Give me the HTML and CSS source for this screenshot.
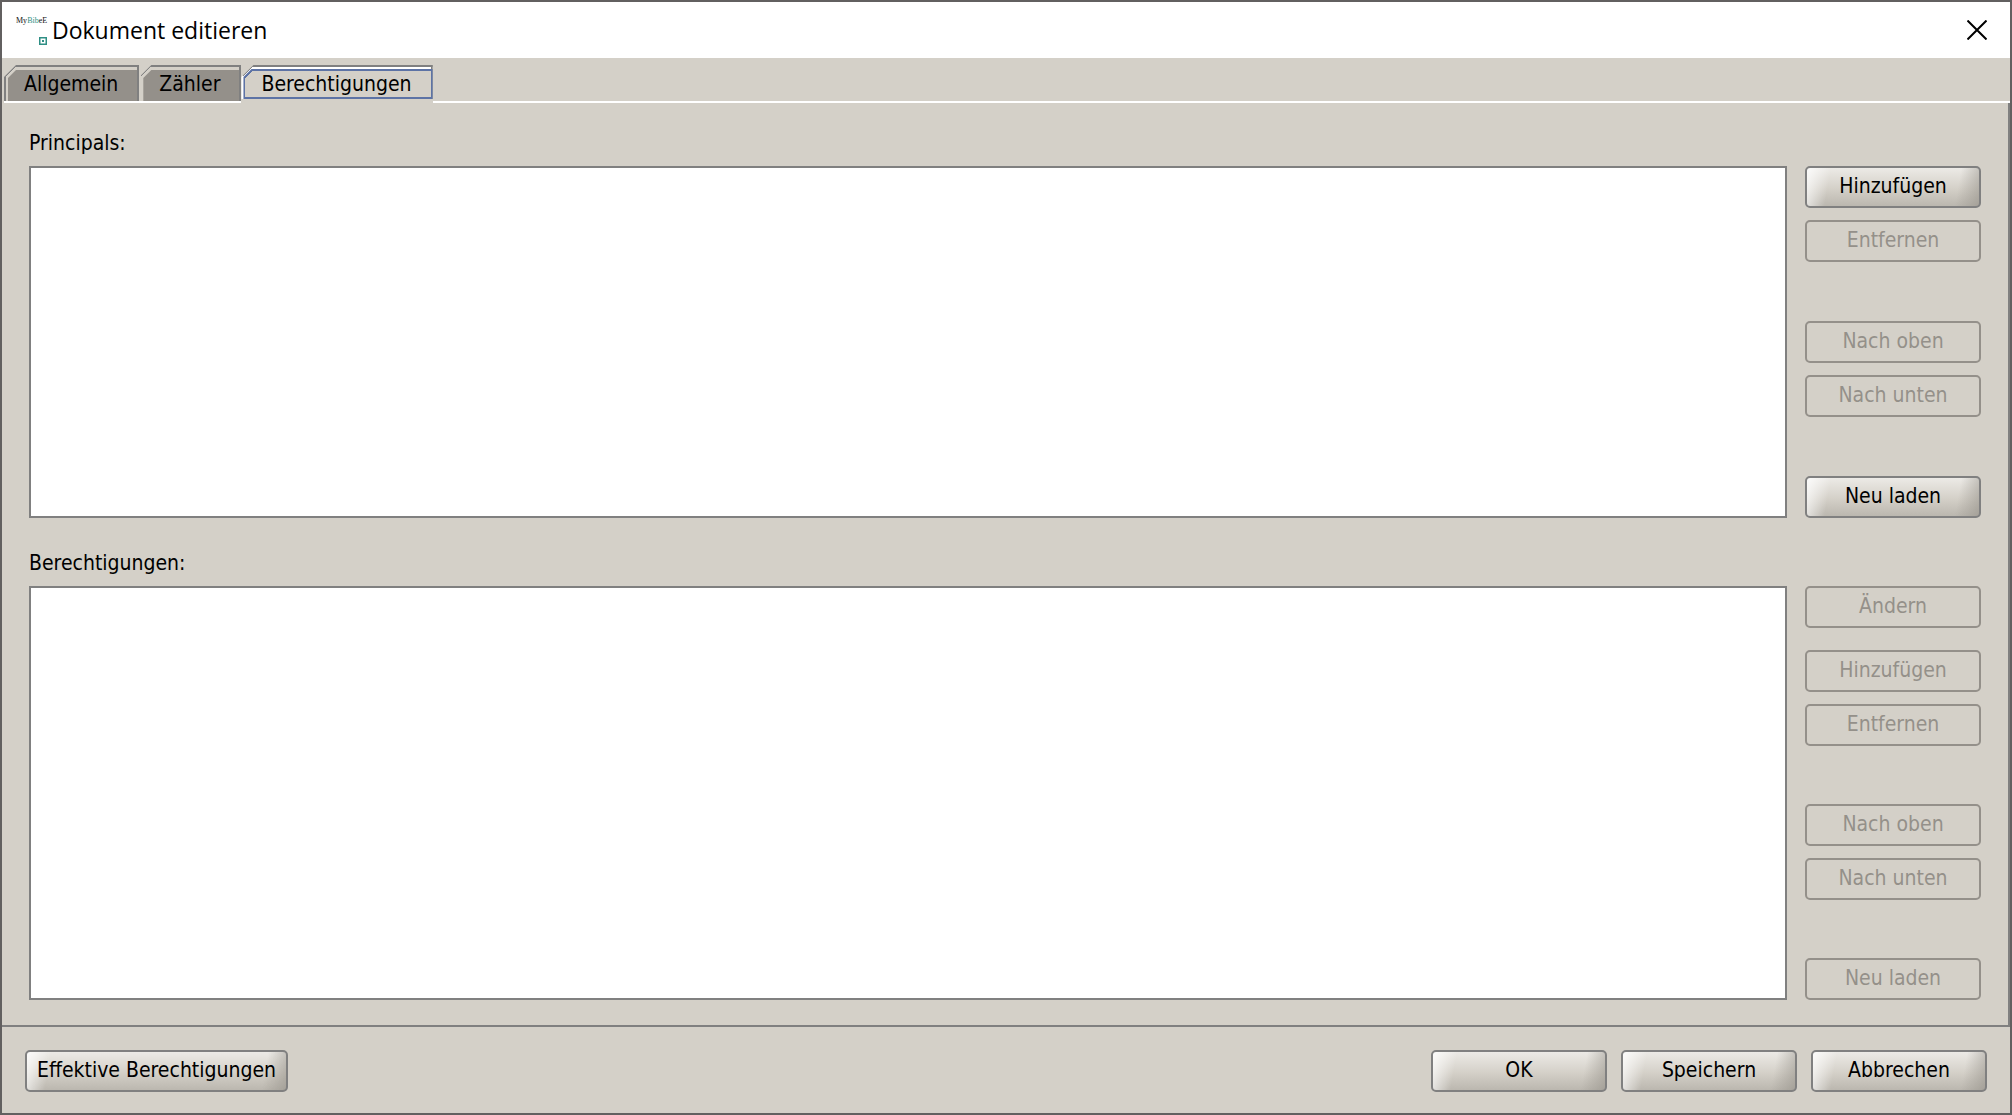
FILE: index.html
```html
<!DOCTYPE html>
<html lang="de">
<head>
    <meta charset="UTF-8">
    <meta name="viewport" content="width=device-width, initial-scale=1.0">
    <title>Dokument editieren</title>
    <link rel="stylesheet" href="styles.css">
</head>
<body>
    <div class="dialog">
        <header class="titlebar">
            <svg class="logo" viewBox="0 0 32 32" aria-hidden="true">
                <text class="logo-text" x="0" y="9">My<tspan class="logo-accent">Bib</tspan>eE</text>
                <rect x="23.75" y="23.75" width="6.5" height="6.5" fill="#fff" stroke="#2f8f85" stroke-width="1.5"/>
                <rect x="26" y="26" width="2" height="2" fill="#2f8f85"/>
            </svg>
            <h1>Dokument editieren</h1>
            <button class="close" aria-label="Schließen">
                <svg viewBox="0 0 20 20"><path d="M0.5 0.5L19.5 19.5M19.5 0.5L0.5 19.5" fill="none" stroke="#000" stroke-width="2"/></svg>
            </button>
        </header>

        <div class="tabs" role="tablist">
            <button class="tab" role="tab"><span>Allgemein</span></button>
            <button class="tab" role="tab"><span>Zähler</span></button>
            <button class="tab active" role="tab" aria-selected="true"><span>Berechtigungen</span></button>
            <div class="tab-line"></div>
        </div>

        <main class="panel">
            <section class="section grow">
                <label for="principals">Principals:</label>
                <div class="row">
                    <select id="principals" class="list" multiple></select>
                    <div class="actions">
                        <div class="group">
                            <button class="btn">Hinzufügen</button>
                            <button class="btn" disabled>Entfernen</button>
                        </div>
                        <div class="group">
                            <button class="btn" disabled>Nach oben</button>
                            <button class="btn" disabled>Nach unten</button>
                        </div>
                        <div class="group">
                            <button class="btn">Neu laden</button>
                        </div>
                    </div>
                </div>
            </section>

            <section class="section">
                <label for="permissions">Berechtigungen:</label>
                <div class="row">
                    <select id="permissions" class="list" multiple></select>
                    <div class="actions">
                        <div class="group edit">
                            <button class="btn" disabled>Ändern</button>
                        </div>
                        <div class="group">
                            <button class="btn" disabled>Hinzufügen</button>
                            <button class="btn" disabled>Entfernen</button>
                        </div>
                        <div class="group">
                            <button class="btn" disabled>Nach oben</button>
                            <button class="btn" disabled>Nach unten</button>
                        </div>
                        <div class="group">
                            <button class="btn" disabled>Neu laden</button>
                        </div>
                    </div>
                </div>
            </section>
        </main>

        <footer class="footer">
            <button class="btn effective">Effektive Berechtigungen</button>
            <button class="btn">OK</button>
            <button class="btn">Speichern</button>
            <button class="btn">Abbrechen</button>
        </footer>
    </div>
</body>
</html>
```
FILE: styles.css
```css
* {
    box-sizing: border-box;
}

body {
    margin: 0;
    background-color: #d4d0c8;
    color: #000;
    font-family: "DejaVu Sans Condensed", "Noto Sans", sans-serif;
    font-size: 21px;
    line-height: 28px;
}

button {
    font: inherit;
    color: inherit;
}

.dialog {
    display: flex;
    flex-direction: column;
    min-height: 100vh;
    border: 2px solid #626060;
}

/* Title bar */
.titlebar {
    display: flex;
    align-items: center;
    height: 56px;
    padding: 0 23px 0 14px;
    background-color: #fff;
}

.logo {
    width: 32px;
    height: 32px;
}

.logo-text {
    font-family: "Liberation Serif", serif;
    font-size: 8px;
    fill: #111;
}

.logo-accent {
    fill: #2f8f85;
}

h1 {
    flex: 1;
    margin: 0 0 0 4px;
    font-family: "Open Sans", sans-serif;
    font-size: 23px;
    font-weight: normal;
}

.close {
    padding: 0;
    border: 0;
    background: none;
}

.close svg {
    display: block;
    width: 20px;
    height: 20px;
}

/* Tabs */
.tabs {
    display: flex;
    align-items: flex-end;
    padding: 7px 0 0 2px;
}

.tab {
    position: relative;
    height: 38px;
    padding: 2px 21px 0 20px;
    border: 0;
    border-bottom: 2px solid #fff;
    background: none;
}

/* ::before is the outline with its highlight, ::after the face */
.tab::before,
.tab::after {
    content: "";
    position: absolute;
}

.tab::before {
    inset: 0;
    border: 2px solid #808080;
    border-bottom: 0;
    border-left-color: #d4d0c8;
    background: linear-gradient(135deg, #808080 7px, #d4d0c8 7px);
    clip-path: polygon(0 12px, 12px 0, 100% 0, 100% 100%, 0 100%);
}

.tab:first-child::before {
    border-left-color: #808080;
}

.tab::after {
    inset: 5px 2px 0 4px;
    background-color: #94908a;
    clip-path: polygon(0 8px, 8px 0, 100% 0, 100% 100%, 0 100%);
}

.tab span {
    position: relative;
    z-index: 1;
}

.tab.active {
    border-bottom-color: transparent;
}

.tab.active::before {
    bottom: 2px;
    border-left-color: #fff;
    background: linear-gradient(135deg, #808080 7px, #fff 7px);
}

.tab.active::after {
    inset: 4px 0 2px 2px;
    border: 2px solid #5d73a5;
    background: linear-gradient(135deg, #5d73a5 5px, #d4d0c8 5px);
}

.tab-line {
    flex: 1;
    height: 2px;
    background-color: #fff;
}

/* Content */
.panel {
    display: flex;
    flex: 1;
    flex-direction: column;
    gap: 31px;
    padding: 26px 27px 25px;
    border-right: 2px solid #808080;
    border-bottom: 2px solid #808080;
}

.section {
    display: flex;
    flex-direction: column;
    gap: 9px;
}

.grow,
.row {
    flex: 1;
}

.row {
    display: flex;
    gap: 18px;
}

.list {
    flex: 1;
    min-width: 0;
    border: 2px solid #808080;
    border-radius: 0;
    background-color: #fff;
    appearance: none;
}

.actions {
    display: flex;
    flex-direction: column;
    justify-content: space-between;
    gap: 58px;
}

.group {
    display: flex;
    flex-direction: column;
    gap: 12px;
}

.edit {
    margin-bottom: -36px;
}

.btn {
    min-width: 176px;
    height: 42px;
    padding: 0 10px 2px;
    border: 2px solid #808080;
    border-radius: 5px;
    background:
        linear-gradient(100deg, rgba(255, 255, 255, 0.8), rgba(255, 255, 255, 0) 24px),
        linear-gradient(280deg, rgba(150, 146, 138, 0.6), rgba(150, 146, 138, 0) 24px),
        linear-gradient(#eceae6, #d4d0c8 55%, #bbb7af);
}

.btn:disabled {
    border-color: #94908a;
    background: none;
    color: #94908a;
}

/* Footer */
.footer {
    display: flex;
    gap: 14px;
    padding: 23px 23px 21px;
}

.effective {
    margin-right: auto;
}
```
